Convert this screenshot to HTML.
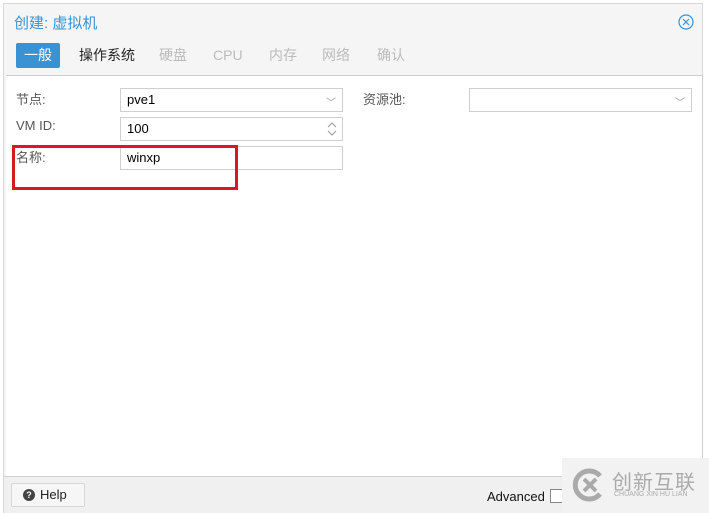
<!DOCTYPE html>
<html><head><meta charset="utf-8"><style>
*{box-sizing:border-box;margin:0;padding:0}
body{width:709px;height:513px;overflow:hidden;background:#fff;font-family:"Liberation Sans","Noto Sans CJK SC",sans-serif;font-size:13px;color:#333;position:relative}
.dlg{position:absolute;left:3px;top:3px;width:700px;height:510px;background:#f5f5f5;border:1px solid #d8d8d8}
.title{position:absolute;left:10px;top:8px;font-size:15px;color:#3892d4}
.close{position:absolute;left:674px;top:10px}
.tab{position:absolute;top:39px;font-size:14px;color:#bbb;height:25px;line-height:25px}
.tab.a{background:#3892d4;color:#fff;left:12px;width:44px;text-align:center;border-radius:2px}
.body{position:absolute;left:2px;top:71px;width:697px;height:402px;background:#fff;border-top:1px solid #cfcfcf;border-right:1px solid #cfcfcf}
.lbl{position:absolute;font-size:13px;color:#555}
.fld{position:absolute;height:24px;border:1px solid #cfcfcf;background:#fff;padding-left:6px;line-height:22px;font-size:13px;color:#000}
.arr{position:absolute;right:6px;top:4px;color:#999;font-size:10px}
.foot{position:absolute;left:0;top:472px;width:698px;height:37px;background:#f0f0f0;border-top:1px solid #d0d0d0}
.help{position:absolute;left:7px;top:6px;width:74px;height:24px;background:#f6f6f6;border:1px solid #d6d6d6;border-radius:2px;font-size:13px;line-height:22px;padding-left:28px;color:#222}
.help i{position:absolute;left:11px;top:5px;width:12px;height:12px;border-radius:50%;background:#444;color:#fff;font-size:9px;line-height:12px;text-align:center;font-style:normal;font-weight:bold}
.wm{position:absolute;left:562px;top:458px;width:147px;height:55px;background:#f2f2f2}
</style></head><body>
<div class="dlg">
<div class="title">创建: 虚拟机</div>
<svg class="close" width="16" height="16" viewBox="0 0 16 16"><circle cx="8" cy="8" r="7" fill="none" stroke="#3892d4" stroke-width="1.2"/><path d="M5 5L11 11M11 5L5 11" stroke="#3892d4" stroke-width="1.2"/></svg>
<div class="tab a">一般</div>
<div class="tab" style="left:75px;color:#222">操作系统</div>
<div class="tab" style="left:155px">硬盘</div>
<div class="tab" style="left:209px">CPU</div>
<div class="tab" style="left:265px">内存</div>
<div class="tab" style="left:318px">网络</div>
<div class="tab" style="left:373px">确认</div>
<div class="body">
<div class="lbl" style="left:10px;top:13px">节点:</div>
<div class="fld" style="left:114px;top:12px;width:223px">pve1<span class="arr">﹀</span></div>
<div class="lbl" style="left:357px;top:13px">资源池:</div>
<div class="fld" style="left:463px;top:12px;width:223px"><span class="arr">﹀</span></div>
<div class="lbl" style="left:10px;top:42px">VM ID:</div>
<div class="fld" style="left:114px;top:41px;width:223px">100<svg style="position:absolute;right:5px;top:3px" width="10" height="16"><path d="M1 6L5 2L9 6M1 10L5 14L9 10" fill="none" stroke="#999"/></svg></div>
<div class="lbl" style="left:10px;top:71px">名称:</div>
<div class="fld" style="left:114px;top:70px;width:223px">winxp</div>
<div style="position:absolute;left:6px;top:69px;width:226px;height:45px;border:3px solid #d9181f"></div>
</div>
<div class="foot">
<div class="help"><i>?</i>Help</div>
<div style="position:absolute;left:483px;top:12px;font-size:13px;color:#111">Advanced</div>
<div style="position:absolute;left:546px;top:12px;width:14px;height:14px;border:1px solid #888;background:#fff"></div>
</div>
</div>
<div class="wm">
<svg style="position:absolute;left:10px;top:10px" width="34" height="34" viewBox="0 0 34 34"><path d="M28 8A14 14 0 1 0 28 26" fill="none" stroke="#aaa" stroke-width="5"/><path d="M12 11L24 23M24 11L12 23" stroke="#aaa" stroke-width="4"/></svg>
<div style="position:absolute;left:50px;top:8px;font-size:20px;color:#aaa;letter-spacing:1px">创新互联</div>
<div style="position:absolute;left:52px;top:33px;font-size:7px;color:#aaa">CHUANG XIN HU LIAN</div>
</div>
</body></html>
